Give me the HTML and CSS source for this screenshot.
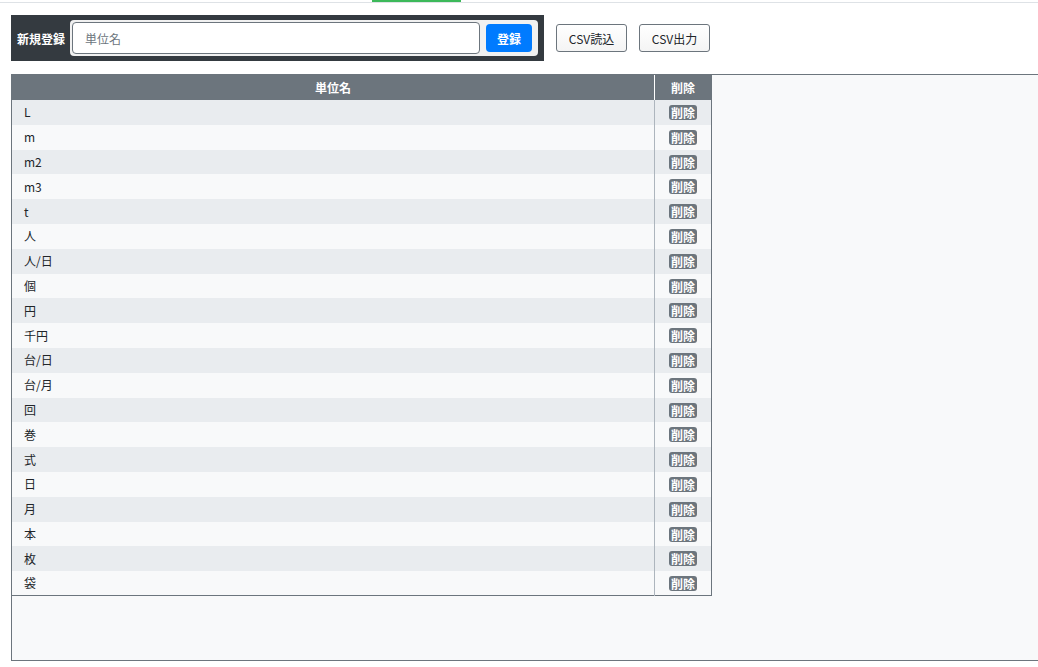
FILE: index.html
```html
<!DOCTYPE html>
<html lang="ja">
<head>
<meta charset="utf-8">
<link rel="stylesheet" href="styles.css">
</head>
<body>
<div class="topbar"><div class="tab-active"></div></div>
<div class="toolbar">
  <div class="newform">
    <span class="newlabel">新規登録</span>
    <div class="inputgroup">
      <input class="nameinput" type="text" placeholder="単位名">
      <button class="btn-primary">登録</button>
    </div>
  </div>
  <button class="btn-outline">CSV読込</button>
  <button class="btn-outline">CSV出力</button>
</div>
<div class="tablewrap">
  <table class="units">
    <thead>
      <tr><th class="col-name">単位名</th><th class="col-del">削除</th></tr>
    </thead>
    <tbody>
      <tr><td>L</td><td class="del"><span class="badge">削除</span></td></tr>
      <tr><td>m</td><td class="del"><span class="badge">削除</span></td></tr>
      <tr><td>m2</td><td class="del"><span class="badge">削除</span></td></tr>
      <tr><td>m3</td><td class="del"><span class="badge">削除</span></td></tr>
      <tr><td>t</td><td class="del"><span class="badge">削除</span></td></tr>
      <tr><td>人</td><td class="del"><span class="badge">削除</span></td></tr>
      <tr><td>人/日</td><td class="del"><span class="badge">削除</span></td></tr>
      <tr><td>個</td><td class="del"><span class="badge">削除</span></td></tr>
      <tr><td>円</td><td class="del"><span class="badge">削除</span></td></tr>
      <tr><td>千円</td><td class="del"><span class="badge">削除</span></td></tr>
      <tr><td>台/日</td><td class="del"><span class="badge">削除</span></td></tr>
      <tr><td>台/月</td><td class="del"><span class="badge">削除</span></td></tr>
      <tr><td>回</td><td class="del"><span class="badge">削除</span></td></tr>
      <tr><td>巻</td><td class="del"><span class="badge">削除</span></td></tr>
      <tr><td>式</td><td class="del"><span class="badge">削除</span></td></tr>
      <tr><td>日</td><td class="del"><span class="badge">削除</span></td></tr>
      <tr><td>月</td><td class="del"><span class="badge">削除</span></td></tr>
      <tr><td>本</td><td class="del"><span class="badge">削除</span></td></tr>
      <tr><td>枚</td><td class="del"><span class="badge">削除</span></td></tr>
      <tr><td>袋</td><td class="del"><span class="badge">削除</span></td></tr>
    </tbody>
  </table>
</div>
</body>
</html>
```
FILE: styles.css
```css
* { box-sizing: border-box; }
html, body {
  margin: 0;
  padding: 0;
  background: #ffffff;
  font-family: "Noto Sans CJK JP", "Noto Sans", sans-serif;
  font-size: 12px;
  color: #212529;
  overflow: hidden;
}
.topbar {
  height: 3px;
  border-bottom: 1px solid #dee2e6;
}
.tab-active {
  margin-left: 372px;
  width: 89px;
  height: 2px;
  background: #3cb95a;
}
.toolbar {
  display: flex;
  align-items: center;
  gap: 12px;
  padding: 12px 0 0 11px;
}
.newform {
  display: flex;
  align-items: center;
  width: 533px;
  height: 46px;
  background: #343a40;
  padding: 0 6px;
  gap: 5px;
}
.newlabel {
  color: #ffffff;
  font-weight: bold;
  font-size: 12px;
  white-space: nowrap;
}
.inputgroup {
  flex: 1;
  display: flex;
  align-items: center;
  height: 36px;
  background: #f1f1f1;
  border-radius: 4px;
  padding: 0 6px 0 2px;
  gap: 6px;
}
.nameinput {
  flex: 1;
  height: 32px;
  border: 1px solid #6c757d;
  border-radius: 4px;
  background: #ffffff;
  padding: 0 12px;
  font-family: inherit;
  font-size: 12px;
  color: #212529;
}
.nameinput::placeholder { color: #6c757d; }
.btn-primary {
  width: 46px;
  height: 28px;
  border: none;
  border-radius: 4px;
  background: #007bff;
  color: #ffffff;
  font-family: inherit;
  font-weight: bold;
  font-size: 12px;
  padding: 0;
}
.btn-outline {
  width: 71px;
  height: 28px;
  border: 1px solid #6c757d;
  border-radius: 3px;
  background: linear-gradient(#ffffff, #f4f4f4);
  color: #212529;
  font-family: inherit;
  font-size: 12px;
  padding: 0;
}
.tablewrap {
  margin: 13px 0 0 11px;
  width: 1040px;
  height: 587px;
  border: 1px solid #6c757d;
  background: #f8f9fa;
}
.units {
  border-collapse: collapse;
  width: 700px;
  border-right: 1px solid #6c757d;
  border-bottom: 1px solid #6c757d;
}
.units th {
  background: #6c757d;
  color: #ffffff;
  font-weight: bold;
  font-size: 12px;
  height: 25px;
  padding: 0;
  text-align: center;
}
.units th.col-name { border-right: 1px solid #ffffff; }
.units th.col-del { width: 57px; }
.units td {
  height: 24.8px;
  padding: 0 0 0 12px;
  font-size: 12px;
  line-height: 1;
  border-right: 1px solid #adb5bd;
}
.units td.del {
  padding: 0;
  text-align: center;
  border-right: none;
}
.units tbody tr:nth-child(odd) { background: #e9ecef; }
.units tbody tr:nth-child(even) { background: #f8f9fa; }
.badge {
  display: inline-block;
  background: #6c757d;
  color: #ffffff;
  font-weight: bold;
  font-size: 12px;
  line-height: 15px;
  padding: 0 2px;
  border-radius: 3px;
  vertical-align: middle;
}
```
